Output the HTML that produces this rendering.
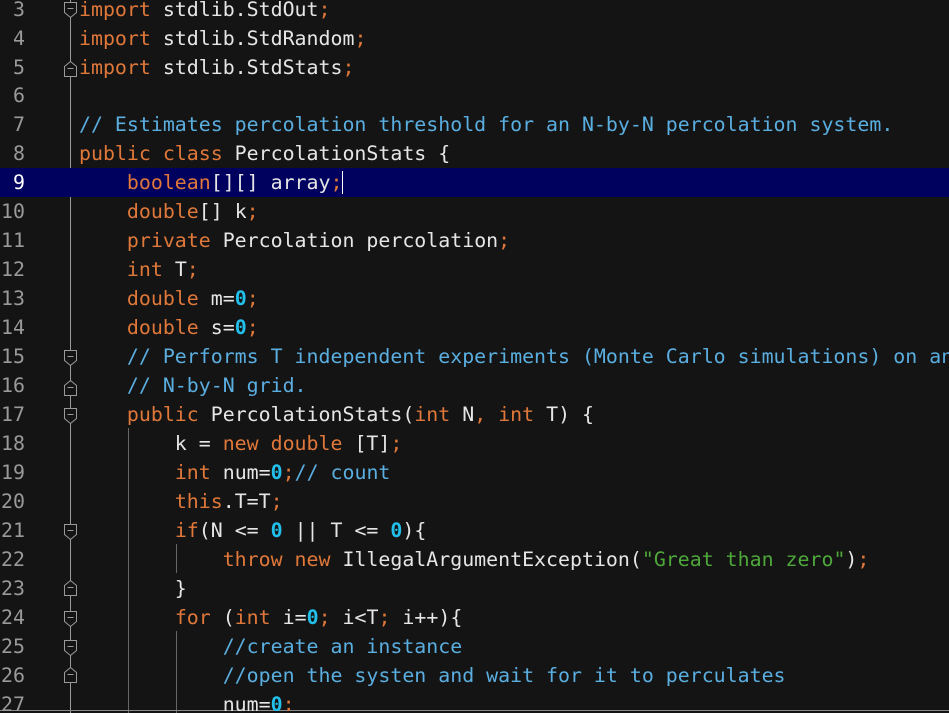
<!DOCTYPE html>
<html><head><meta charset="utf-8"><style>
html,body{margin:0;padding:0;background:#141414;width:949px;height:713px;overflow:hidden;position:relative}
.l{position:absolute;left:0;width:949px;height:29px;line-height:29px;font-family:"DejaVu Sans Mono","Liberation Mono",monospace;font-size:19.9px;color:#e6e6e6;white-space:pre}
.n{position:absolute;left:0;width:25px;text-align:right;color:#9a9a9a}
.c{position:absolute;left:79px}
.k{color:#e0783a}.m{color:#5aaee0}.d{color:#22bfea;font-weight:bold}.s{color:#4ea83a}
.hl{background:#00005e}.hl .n{color:#fff}
.v{position:absolute;width:1px;background:#8a8a8a}
</style></head><body>
<div class="v" style="left:70px;top:0;height:713px;background:#9a9a9a"></div>
<div class="v" style="left:128px;top:428px;height:285px;background:#666"></div>
<div class="v" style="left:176px;top:544px;height:29px;background:#666"></div>
<div class="v" style="left:176px;top:631px;height:82px;background:#666"></div>
<div style="position:absolute;left:0;top:710px;width:949px;height:1px;background:#888"></div>
<div class="l" style="top:-5.5px"><span class="n">3</span><span class="c"><span class="k">import</span> stdlib.StdOut<span class="k">;</span></span></div>
<div class="l" style="top:23.5px"><span class="n">4</span><span class="c"><span class="k">import</span> stdlib.StdRandom<span class="k">;</span></span></div>
<div class="l" style="top:52.5px"><span class="n">5</span><span class="c"><span class="k">import</span> stdlib.StdStats<span class="k">;</span></span></div>
<div class="l" style="top:81.4px"><span class="n">6</span></div>
<div class="l" style="top:110.3px"><span class="n">7</span><span class="c m">// Estimates percolation threshold for an N-by-N percolation system.</span></div>
<div class="l" style="top:139.3px"><span class="n">8</span><span class="c"><span class="k">public class</span> PercolationStats {</span></div>
<div class="l hl" style="top:168.3px"><span class="n">9</span><span class="c">    <span class="k">boolean</span>[][] array<span class="k">;</span><span style="border-left:1.5px solid #fff"></span></span></div>
<div class="l" style="top:197.2px"><span class="n">10</span><span class="c">    <span class="k">double</span>[] k<span class="k">;</span></span></div>
<div class="l" style="top:226.2px"><span class="n">11</span><span class="c">    <span class="k">private</span> Percolation percolation<span class="k">;</span></span></div>
<div class="l" style="top:255.1px"><span class="n">12</span><span class="c">    <span class="k">int</span> T<span class="k">;</span></span></div>
<div class="l" style="top:284.1px"><span class="n">13</span><span class="c">    <span class="k">double</span> m=<span class="d">0</span><span class="k">;</span></span></div>
<div class="l" style="top:313.1px"><span class="n">14</span><span class="c">    <span class="k">double</span> s=<span class="d">0</span><span class="k">;</span></span></div>
<div class="l" style="top:342px"><span class="n">15</span><span class="c m">    // Performs T independent experiments (Monte Carlo simulations) on an</span></div>
<div class="l" style="top:371px"><span class="n">16</span><span class="c m">    // N-by-N grid.</span></div>
<div class="l" style="top:399.9px"><span class="n">17</span><span class="c">    <span class="k">public</span> PercolationStats(<span class="k">int</span> N<span class="k">,</span> <span class="k">int</span> T) {</span></div>
<div class="l" style="top:428.9px"><span class="n">18</span><span class="c">        k = <span class="k">new double</span> [T]<span class="k">;</span></span></div>
<div class="l" style="top:457.8px"><span class="n">19</span><span class="c">        <span class="k">int</span> num=<span class="d">0</span><span class="k">;</span><span class="m">// count</span></span></div>
<div class="l" style="top:486.8px"><span class="n">20</span><span class="c">        <span class="k">this</span>.T=T<span class="k">;</span></span></div>
<div class="l" style="top:515.8px"><span class="n">21</span><span class="c">        <span class="k">if</span>(N &lt;= <span class="d">0</span> || T &lt;= <span class="d">0</span>){</span></div>
<div class="l" style="top:544.7px"><span class="n">22</span><span class="c">            <span class="k">throw new</span> IllegalArgumentException(<span class="s">"Great than zero"</span>)<span class="k">;</span></span></div>
<div class="l" style="top:573.7px"><span class="n">23</span><span class="c">        }</span></div>
<div class="l" style="top:602.6px"><span class="n">24</span><span class="c">        <span class="k">for</span> (<span class="k">int</span> i=<span class="d">0</span><span class="k">;</span> i&lt;T<span class="k">;</span> i++){</span></div>
<div class="l" style="top:631.6px"><span class="n">25</span><span class="c m">            //create an instance</span></div>
<div class="l" style="top:660.5px"><span class="n">26</span><span class="c m">            //open the systen and wait for it to perculates</span></div>
<div class="l" style="top:689.5px;height:21px;overflow:hidden"><span class="n">27</span><span class="c">            num=<span class="d">0</span><span class="k">;</span></span></div>
<svg width="949" height="713" style="position:absolute;left:0;top:0">
<g fill="#141414" stroke="#9a9a9a" stroke-width="1">
<path d="M64.5 2.5h12v10l-6 5l-6-5z M67.5 8.5h6"/>
<path d="M64.5 76.5h12v-10l-6-5l-6 5z M67.5 68.5h6"/>
<path d="M64.5 350.5h12v10l-6 5l-6-5z M67.5 356.5h6"/>
<path d="M64.5 395.5h12v-10l-6-5l-6 5z M67.5 387.5h6"/>
<path d="M64.5 408.5h12v10l-6 5l-6-5z M67.5 414.5h6"/>
<path d="M64.5 524.5h12v10l-6 5l-6-5z M67.5 530.5h6"/>
<path d="M64.5 595.5h12v-10l-6-5l-6 5z M67.5 587.5h6"/>
<path d="M64.5 611.5h12v10l-6 5l-6-5z M67.5 617.5h6"/>
<path d="M64.5 640.5h12v10l-6 5l-6-5z M67.5 646.5h6"/>
<path d="M64.5 682.5h12v-10l-6-5l-6 5z M67.5 674.5h6"/>
</g>
</svg>
</body></html>
